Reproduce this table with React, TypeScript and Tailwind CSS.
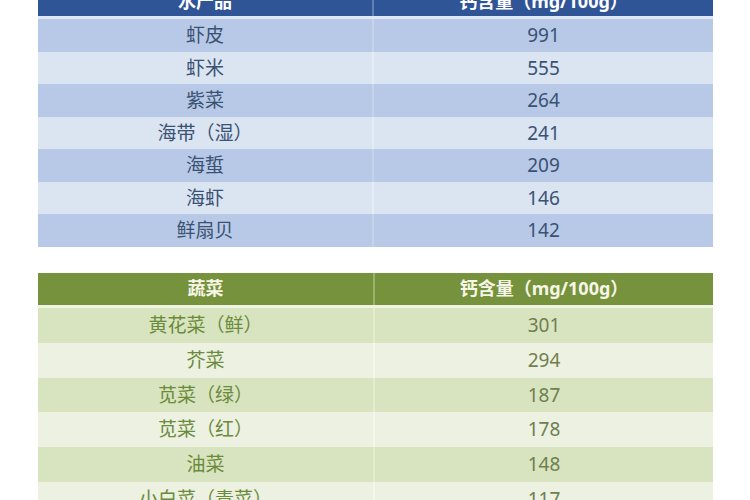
import React from "react";

const blueRows: [string, string][] = [
  ["虾皮", "991"],
  ["虾米", "555"],
  ["紫菜", "264"],
  ["海带（湿）", "241"],
  ["海蜇", "209"],
  ["海虾", "146"],
  ["鲜扇贝", "142"],
];

const greenRows: [string, string][] = [
  ["黄花菜（鲜）", "301"],
  ["芥菜", "294"],
  ["苋菜（绿）", "187"],
  ["苋菜（红）", "178"],
  ["油菜", "148"],
  ["小白菜（青菜）", "117"],
];

const font = { fontFamily: '"Noto Sans", "Noto Sans CJK SC", sans-serif' };

export default function App() {
  return (
    <div className="w-[750px] h-[500px] overflow-hidden bg-white" style={font}>
      <div className="ml-[38px] w-[675px] flex flex-col">
        {/* Blue table */}
        <div className="mt-[-14px] flex flex-col">
          <div className="grid grid-cols-[336px_339px] h-[30px] bg-[#2f5597] border-b-[3px] border-[#dfe7f3] box-content">
            <div className="flex items-center justify-center text-white font-bold text-[18px] border-r-2 border-[#5f7fb5]">水产品</div>
            <div className="flex items-center justify-center text-white font-bold text-[18px]">钙含量（mg/100g）</div>
          </div>
          {blueRows.map(([a, b], i) => (
            <div
              key={a}
              className={`grid grid-cols-[336px_339px] h-[32.57px] text-[19px] text-[#3a5274] ${
                i % 2 === 0 ? "bg-[#b7c9e6]" : "bg-[#dbe4f1]"
              }`}
            >
              <div className={`flex items-center justify-center border-r-2 ${i % 2 === 0 ? "border-[#c6d4ea]" : "border-[#e6ecf6]"}`}>{a}</div>
              <div className="flex items-center justify-center">{b}</div>
            </div>
          ))}
        </div>

        {/* Green table */}
        <div className="mt-[26px] flex flex-col">
          <div className="grid grid-cols-[337px_338px] h-[32px] bg-[#76923c] border-b-[3px] border-[#eef3e2] box-content">
            <div className="flex items-center justify-center text-[#f6f6e8] font-bold text-[18px] border-r-2 border-[#9ab36a]">蔬菜</div>
            <div className="flex items-center justify-center text-[#f6f6e8] font-bold text-[18px]">钙含量（mg/100g）</div>
          </div>
          {greenRows.map(([a, b], i) => (
            <div
              key={a}
              className={`grid grid-cols-[337px_338px] h-[34.8px] text-[19px] text-[#6b8a3a] ${
                i % 2 === 0 ? "bg-[#d8e4bf]" : "bg-[#ecf1e1]"
              }`}
            >
              <div className={`flex items-center justify-center border-r-2 ${i % 2 === 0 ? "border-[#e3ecd0]" : "border-[#f3f6ec]"}`}>{a}</div>
              <div className="flex items-center justify-center text-[#6f7f4f]">{b}</div>
            </div>
          ))}
        </div>
      </div>
    </div>
  );
}
